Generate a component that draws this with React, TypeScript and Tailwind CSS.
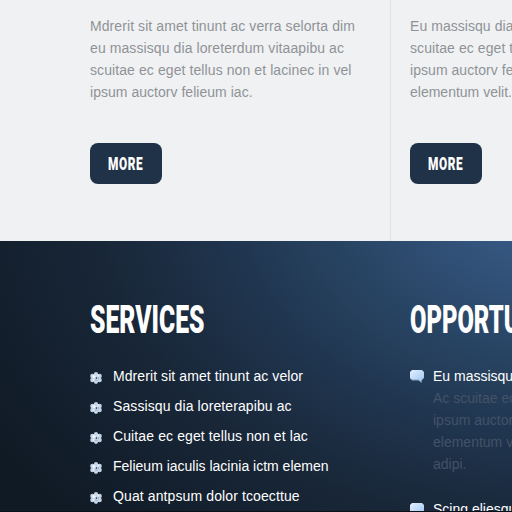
import React from "react";

const body = "font-['Liberation_Sans',Arial,sans-serif] text-[14px] whitespace-nowrap";
const display = "block origin-top-left whitespace-nowrap font-['Roboto',sans-serif] font-black text-white";

function Copy({ lines }: { lines: [string, string][] }) {
  return (
    <div className={`${body} leading-[22px] text-[#8f9397]`}>
      {lines.map(([text, spacing]) => (
        <div key={text} className={spacing}>{text}</div>
      ))}
    </div>
  );
}

function More() {
  return (
    <button className="mt-10 block h-[41px] w-[72px] rounded-[8px] bg-[#203248] pl-[18px] text-left">
      <span className={`${display} scale-x-[0.62] text-[19px] leading-[40px] tracking-[1px]`}>MORE</span>
    </button>
  );
}

function Flower() {
  return (
    <svg width="12" height="12" viewBox="0 0 12 12" className="mt-[7px] shrink-0">
      <g fill="#c5d5e7">
        <circle cx="6" cy="2.2" r="2.1" />
        <circle cx="9.6" cy="4" r="2.2" />
        <circle cx="9.6" cy="8" r="2.2" />
        <circle cx="6" cy="9.8" r="2.1" />
        <circle cx="2.4" cy="8" r="2.2" />
        <circle cx="2.4" cy="4" r="2.2" />
        <circle cx="6" cy="6" r="4.4" />
      </g>
      <circle cx="4" cy="4.6" r="1.6" fill="#eff6fc" />
      <circle cx="8" cy="3.4" r="1" fill="#e6f0fa" />
      <circle cx="3.6" cy="8" r="1" fill="#e6f0fa" />
      <path d="M4.8 8.3 7.5 8.2M8.4 5.2 8.5 7" stroke="#91a9c4" strokeWidth=".8" fill="none" />
      <circle cx="6.4" cy="6.1" r="0.8" fill="#223850" />
    </svg>
  );
}

function Bubble() {
  return (
    <svg width="14" height="13" viewBox="0 0 14 13" className="mt-[5px] shrink-0">
      <defs>
        <linearGradient id="bubble" x1="0" y1="0" x2="1" y2="1">
          <stop offset="0" stopColor="#e2f0ff" />
          <stop offset="1" stopColor="#9dc3ef" />
        </linearGradient>
      </defs>
      <path d="M2 0H12L14 2V7.8L12.2 10H11.6V12.8L8.4 10.2H2L0 8.2V2Z" fill="url(#bubble)" />
      <path d="M1 8.4 2.4 9.8H8.5L11.2 12M11.8 9.7 13.3 8" stroke="#7d9fc6" strokeWidth=".7" fill="none" />
    </svg>
  );
}

const services: [string, string][] = [
  ["Mdrerit sit amet tinunt ac velor", "tracking-[0.08px]"],
  ["Sassisqu dia loreterapibu ac", "tracking-[0.1px]"],
  ["Cuitae ec eget tellus non et lac", "tracking-[0.11px]"],
  ["Felieum iaculis lacinia ictm elemen", "tracking-[0px]"],
  ["Quat antpsum dolor tcoecttue", "tracking-[0.11px]"],
];

export default function App() {
  return (
    <div className="h-[512px] w-[512px] overflow-hidden bg-[#f0f1f3]">
      <section className="flex h-[241px] pl-[90px]">
        <div className="w-[301px] shrink-0 border-r border-[#dfe1e4] pt-[15px]">
          <Copy
            lines={[
              ["Mdrerit sit amet tinunt ac verra selorta dim", "tracking-[0.08px]"],
              ["eu massisqu dia loreterdum vitaapibu ac", "tracking-[0.09px]"],
              ["scuitae ec eget tellus non et lacinec in vel", "tracking-[0.09px]"],
              ["ipsum auctorv felieum iac.", "tracking-[0.03px]"],
            ]}
          />
          <More />
        </div>
        <div className="shrink-0 pl-[19px] pt-[15px]">
          <Copy
            lines={[
              ["Eu massisqu dia loreterdum", "tracking-[0.05px]"],
              ["scuitae ec eget tellus non", "tracking-[0.08px]"],
              ["ipsum auctorv felieum iac", "tracking-[0.05px]"],
              ["elementum velit.", "tracking-[0px]"],
            ]}
          />
          <More />
        </div>
      </section>
      <section className="flex h-[271px] overflow-hidden border-b border-[#0b1119] bg-[radial-gradient(ellipse_580px_420px_at_565px_-50px,#3a5f91_0%,#34557e_18%,#284463_40%,#1f344d_60%,#182637_82%,#101a25_115%)] pl-[90px] pt-[59px]">
        <div className="w-[320px] shrink-0">
          <h2 className="h-[65px]">
            <span className={`${display} scale-x-[0.633] text-[39px] leading-[40px]`}>SERVICES</span>
          </h2>
          <ul className={`${body} text-white`}>
            {services.map(([text, spacing]) => (
              <li key={text} className="flex h-[30px] gap-[11px]">
                <Flower />
                <span className={`leading-[22px] ${spacing}`}>{text}</span>
              </li>
            ))}
          </ul>
        </div>
        <div className="shrink-0">
          <h2 className="h-[65px]">
            <span className={`${display} scale-x-[0.61] text-[39px] leading-[40px]`}>OPPORTUNITIES</span>
          </h2>
          <ul className={`${body} leading-[22px] text-white`}>
            <li className="flex h-[133px] gap-[9px]">
              <Bubble />
              <div>
                <div>Eu massisqu dia</div>
                <div className="text-[#435267]">
                  <div>Ac scuitae ec eget</div>
                  <div>ipsum auctorv fel</div>
                  <div>elementum velit</div>
                  <div>adipi.</div>
                </div>
              </div>
            </li>
            <li className="flex gap-[9px]">
              <Bubble />
              <div>Scing eliesqu dia</div>
            </li>
          </ul>
        </div>
      </section>
    </div>
  );
}
